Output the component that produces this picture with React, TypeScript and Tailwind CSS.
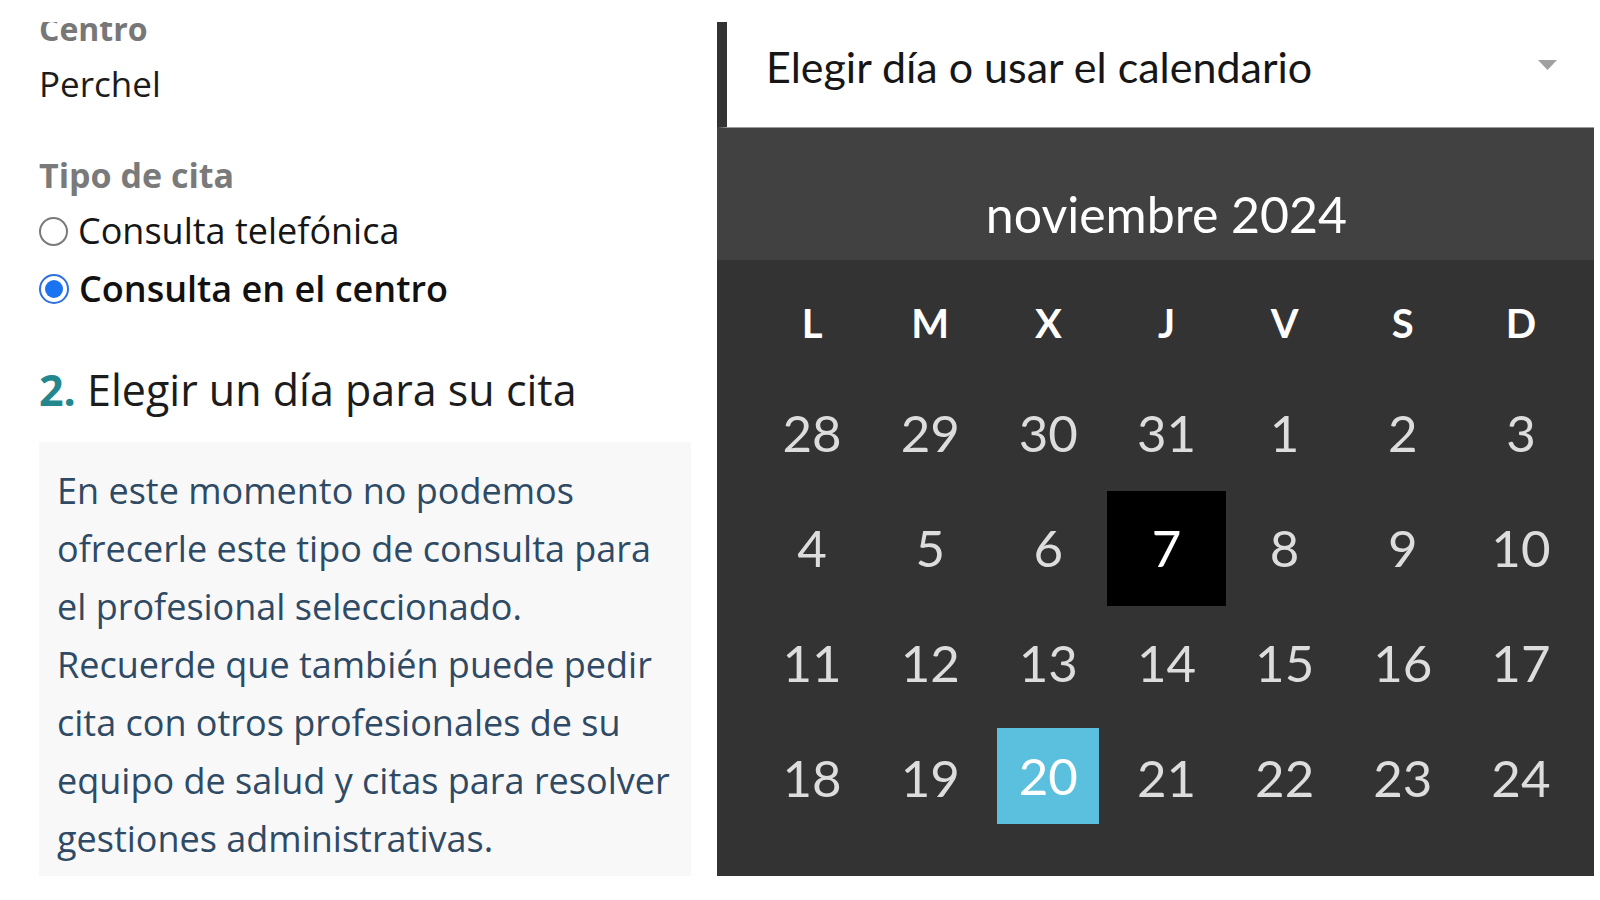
import React from 'react';

const weeks: number[][] = [
  [28, 29, 30, 31, 1, 2, 3],
  [4, 5, 6, 7, 8, 9, 10],
  [11, 12, 13, 14, 15, 16, 17],
  [18, 19, 20, 21, 22, 23, 24],
  [25, 26, 27, 28, 29, 30, 1],
];

const dayNames = ['L', 'M', 'X', 'J', 'V', 'S', 'D'];

function Radio({ checked }: { checked?: boolean }) {
  if (checked) {
    return (
      <span className="w-[30px] h-[30px] rounded-full border-2 border-[#2f6fdf] bg-white flex items-center justify-center shrink-0">
        <span className="w-[18px] h-[18px] rounded-full bg-[#1a73f0]" />
      </span>
    );
  }
  return <span className="w-[29px] h-[29px] rounded-full border-2 border-[#7a7a7a] bg-white shrink-0" />;
}

function DayCell({ week, col, day }: { week: number; col: number; day: number }) {
  const isToday = week === 1 && col === 3;
  const isSelected = week === 3 && col === 2;

  if (isSelected) {
    return (
      <div className="h-[115px] px-[8px] pt-[7px] pb-[12px]">
        <div className="h-full bg-[#5bc0de] flex items-center justify-center text-white">{day}</div>
      </div>
    );
  }
  return (
    <div className={`h-[115px] flex items-center justify-center ${isToday ? 'bg-black text-white' : 'text-[#dddddd]'}`}>
      {day}
    </div>
  );
}

export default function App() {
  return (
    <div className="w-[1600px] h-[900px] bg-white flex pt-[22px] overflow-hidden">
      {/* Left column */}
      <div
        className="w-[717px] h-[854px] shrink-0 pl-[39px] pr-[26px] overflow-hidden flex flex-col"
        style={{ fontFamily: '"Open Sans", "Noto Sans", sans-serif' }}
      >
        <div className="-mt-[11px] text-[32px] leading-[36px] font-bold text-[#777777]">Centro</div>
        <div className="mt-[13px] text-[35px] leading-[48px] text-[#1c1c1c]">Perchel</div>

        <div className="mt-[46px] text-[34px] leading-[42px] font-bold text-[#7a7a7a]">Tipo de cita</div>
        <div className="mt-[8px] flex items-center gap-[10px] h-[54px]">
          <Radio />
          <span className="text-[36px] text-[#161616]">Consulta telefónica</span>
        </div>
        <div className="mt-[4px] flex items-center gap-[10px] h-[54px]">
          <Radio checked />
          <span className="text-[36px] font-semibold text-[#111111]">Consulta en el centro</span>
        </div>

        <h2 className="mt-[46px] text-[43px] leading-[56px] text-[#1c1c1c]">
          <span className="font-bold text-[#23878d]">2.</span> Elegir un día para su cita
        </h2>

        <div className="mt-[24px] flex-1 bg-[#f8f8f9] pl-[18px] pr-[8px] pt-[20px] text-[36px] leading-[58px] text-[#2e4a64]">
          En este momento no podemos ofrecerle este tipo de consulta para el profesional seleccionado.
          <br />
          Recuerde que también puede pedir cita con otros profesionales de su equipo de salud y citas para resolver
          gestiones administrativas.
        </div>
      </div>

      {/* Calendar */}
      <div
        className="w-[877px] h-[854px] shrink-0 bg-[#333333] flex flex-col overflow-hidden"
        style={{ fontFamily: 'Lato, "Noto Sans", sans-serif' }}
      >
        <div className="h-[106px] shrink-0 bg-white border-l-[10px] border-l-[#333333] border-b border-b-[#9a9a9a] flex items-center justify-between pl-[39px] pr-[37px] pb-[14px]">
          <span className="text-[43px] text-[#161616]">Elegir día o usar el calendario</span>
          <svg width="19" height="10" viewBox="0 0 19 10" className="mb-[6px]">
            <path d="M0 0 L19 0 L9.5 10 Z" fill="#a0a0a0" />
          </svg>
        </div>

        <div className="h-[132px] shrink-0 bg-[#414141] pt-[56px] pl-[36px] pr-[14px] text-center text-[50px] leading-[1.2] text-white">
          noviembre 2024
        </div>

        <div className="grid grid-cols-7 pl-[36px] pr-[14px]">
          {dayNames.map((d) => (
            <div key={d} className="h-[116px] pt-[10px] flex items-center justify-center text-[40px] font-bold text-white">
              {d}
            </div>
          ))}
        </div>

        <div className="grid grid-cols-7 pl-[36px] pr-[14px] text-[51px]">
          {weeks.map((week, w) =>
            week.map((day, c) => <DayCell key={`${w}-${c}`} week={w} col={c} day={day} />)
          )}
        </div>
      </div>
    </div>
  );
}
